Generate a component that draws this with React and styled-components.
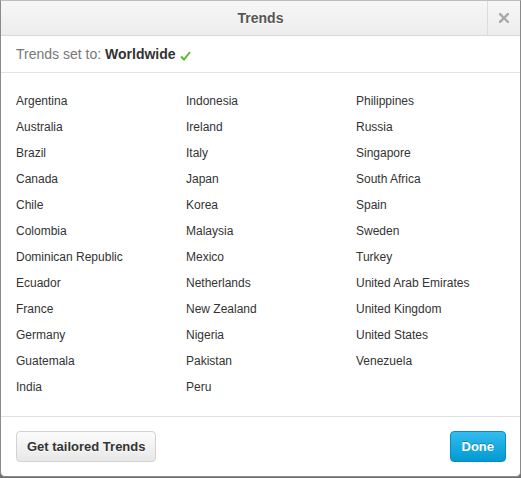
import React from "react";
import styled, { createGlobalStyle } from "styled-components";

const Global = createGlobalStyle`
  html, body { margin: 0; padding: 0; }
  body { background: #6f6f6f; font-family: "Liberation Sans", Arial, sans-serif; }
`;

const Modal = styled.div`
  box-sizing: border-box;
  width: 521px;
  height: 477px;
  background: #fff;
  border: 1px solid #8a8a8a;
  border-top-color: #bdbdbd;
  border-radius: 0 0 5px 5px;
  display: flex;
  flex-direction: column;
  overflow: hidden;
`;

const Header = styled.div`
  height: 34px;
  flex: none;
  display: flex;
  align-items: stretch;
  background: linear-gradient(#f6f6f6, #ededed);
  border-bottom: 1px solid #d8d8d8;
`;

const Title = styled.h3`
  flex: 1;
  margin: 0;
  padding-left: 33px;
  display: flex;
  align-items: center;
  justify-content: center;
  font-size: 14px;
  font-weight: bold;
  color: #555;
  text-shadow: 0 1px 0 #fff;
`;

const Close = styled.button`
  width: 33px;
  border: 0;
  border-left: 1px solid #dcdcdc;
  background: transparent;
  display: flex;
  align-items: center;
  justify-content: center;
  padding: 0;
  cursor: pointer;
`;

const SetTo = styled.div`
  height: 36px;
  flex: none;
  display: flex;
  align-items: center;
  padding: 0 15px;
  border-bottom: 1px solid #e3e3e3;
  font-size: 14px;
  color: #777;
`;

const Strong = styled.b`
  color: #333;
  margin-left: 4px;
`;

const Check = styled.svg`
  margin-left: 4px;
  margin-top: 3px;
`;

const List = styled.div`
  flex: 1;
  display: grid;
  grid-template-columns: 170px 170px 170px;
  grid-auto-flow: column;
  grid-template-rows: repeat(12, 26px);
  padding: 15px 15px 0;
  border-bottom: 1px solid #e0e0e0;
`;

const Item = styled.a`
  display: flex;
  align-items: center;
  font-size: 12px;
  color: #333;
  text-decoration: none;
`;

const Footer = styled.div`
  flex: none;
  display: flex;
  justify-content: space-between;
  align-items: center;
  padding: 14px 14px 14px 15px;
  height: 31px;
`;

const Button = styled.button`
  box-sizing: border-box;
  height: 31px;
  border-radius: 4px;
  font-family: "Liberation Sans", Arial, sans-serif;
  font-size: 13px;
  font-weight: bold;
  cursor: pointer;
  border: 1px solid ${(p) => (p.$primary ? "#0c8ac0" : "#d2d2d2")};
  color: ${(p) => (p.$primary ? "#fff" : "#333")};
  text-shadow: ${(p) => (p.$primary ? "0 -1px 0 rgba(0,0,0,0.25)" : "0 1px 0 #fff")};
  background: ${(p) =>
    p.$primary
      ? "linear-gradient(#33bcef, #019ad2)"
      : "linear-gradient(#fbfbfb, #e8e8e8)"};
  padding: ${(p) => (p.$primary ? "0 11px" : "0 10px")};
`;

const columns = [
  ["Argentina", "Australia", "Brazil", "Canada", "Chile", "Colombia", "Dominican Republic", "Ecuador", "France", "Germany", "Guatemala", "India"],
  ["Indonesia", "Ireland", "Italy", "Japan", "Korea", "Malaysia", "Mexico", "Netherlands", "New Zealand", "Nigeria", "Pakistan", "Peru"],
  ["Philippines", "Russia", "Singapore", "South Africa", "Spain", "Sweden", "Turkey", "United Arab Emirates", "United Kingdom", "United States", "Venezuela"],
];

export default function App() {
  return (
    <>
      <Global />
      <Modal>
        <Header>
          <Title>Trends</Title>
          <Close aria-label="Close">
            <svg width="10" height="10" viewBox="0 0 10 10">
              <path d="M1 1 L9 9 M9 1 L1 9" stroke="#a8a8a8" strokeWidth="2.4" strokeLinecap="square" />
            </svg>
          </Close>
        </Header>
        <SetTo>
          Trends set to:<Strong>Worldwide</Strong>
          <Check width="11" height="10" viewBox="0 0 11 10">
            <path d="M1 5.5 L4 8.5 L10 1" fill="none" stroke="#5cb832" strokeWidth="2" />
          </Check>
        </SetTo>
        <List>
          {columns.map((col, ci) =>
            Array.from({ length: 12 }).map((_, ri) =>
              col[ri] ? (
                <Item key={ci + "-" + ri} href="#">{col[ri]}</Item>
              ) : (
                <span key={ci + "-" + ri} />
              )
            )
          )}
        </List>
        <Footer>
          <Button>Get tailored Trends</Button>
          <Button $primary>Done</Button>
        </Footer>
      </Modal>
    </>
  );
}
